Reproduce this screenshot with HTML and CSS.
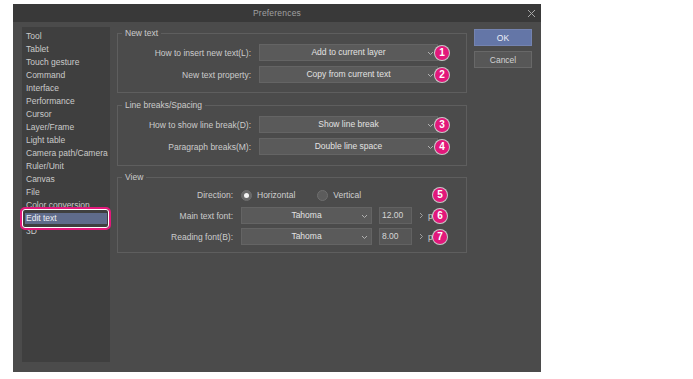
FILE: index.html
```html
<!DOCTYPE html>
<html lang="en">

<head>
    <meta charset="UTF-8">
    <meta name="viewport" content="width=device-width, initial-scale=1.0">
    <title>Preferences</title>
    <link rel="stylesheet" href="styles.css">
</head>

<body>

    <div class="dialog">
        <div class="titlebar">
            <span class="title">Preferences</span>
            <svg class="close" width="9" height="9" viewBox="0 0 9 9">
                <path d="M1 1 L8 8 M8 1 L1 8" stroke="#a8a8a8" stroke-width="1" fill="none" />
            </svg>
        </div>

        <div class="dialog-body">
            <ul class="categories">
                <li>Tool</li>
                <li>Tablet</li>
                <li>Touch gesture</li>
                <li>Command</li>
                <li>Interface</li>
                <li>Performance</li>
                <li>Cursor</li>
                <li>Layer/Frame</li>
                <li>Light table</li>
                <li>Camera path/Camera</li>
                <li>Ruler/Unit</li>
                <li>Canvas</li>
                <li>File</li>
                <li>Color conversion</li>
                <li class="active">Edit text</li>
                <li>3D</li>
            </ul>

            <div class="settings">
                <!-- New text -->
                <div class="group group-new">
                    <span class="group-title">New text</span>
                    <div class="row">
                        <span class="label">How to insert new text(L):</span>
                        <div class="select">Add to current layer<svg class="chev" width="7" height="5" viewBox="0 0 7 5"><path d="M1 1 L3.5 3.5 L6 1" stroke="#b0b0b0" fill="none" /></svg></div>
                        <span class="badge">1</span>
                    </div>
                    <div class="row">
                        <span class="label">New text property:</span>
                        <div class="select">Copy from current text<svg class="chev" width="7" height="5" viewBox="0 0 7 5"><path d="M1 1 L3.5 3.5 L6 1" stroke="#b0b0b0" fill="none" /></svg></div>
                        <span class="badge">2</span>
                    </div>
                </div>

                <!-- Line breaks -->
                <div class="group group-breaks">
                    <span class="group-title">Line breaks/Spacing</span>
                    <div class="row">
                        <span class="label">How to show line break(D):</span>
                        <div class="select">Show line break<svg class="chev" width="7" height="5" viewBox="0 0 7 5"><path d="M1 1 L3.5 3.5 L6 1" stroke="#b0b0b0" fill="none" /></svg></div>
                        <span class="badge">3</span>
                    </div>
                    <div class="row">
                        <span class="label">Paragraph breaks(M):</span>
                        <div class="select">Double line space<svg class="chev" width="7" height="5" viewBox="0 0 7 5"><path d="M1 1 L3.5 3.5 L6 1" stroke="#b0b0b0" fill="none" /></svg></div>
                        <span class="badge">4</span>
                    </div>
                </div>

                <!-- View -->
                <div class="group group-view">
                    <span class="group-title">View</span>
                    <div class="row row-direction">
                        <span class="label label-short">Direction:</span>
                        <span class="radio checked"></span><span class="radio-text">Horizontal</span>
                        <span class="radio"></span><span class="radio-text">Vertical</span>
                        <span class="badge badge-view">5</span>
                    </div>
                    <div class="row">
                        <span class="label label-short">Main text font:</span>
                        <div class="select select-font">Tahoma<svg class="chev" width="7" height="5" viewBox="0 0 7 5"><path d="M1 1 L3.5 3.5 L6 1" stroke="#b0b0b0" fill="none" /></svg></div>
                        <div class="number">12.00</div>
                        <svg class="spin" width="5" height="7" viewBox="0 0 5 7"><path d="M1 1 L3.5 3.5 L1 6" stroke="#a0a0a0" fill="none" /></svg>
                        <span class="unit">pt</span>
                        <span class="badge badge-view">6</span>
                    </div>
                    <div class="row">
                        <span class="label label-short">Reading font(B):</span>
                        <div class="select select-font">Tahoma<svg class="chev" width="7" height="5" viewBox="0 0 7 5"><path d="M1 1 L3.5 3.5 L6 1" stroke="#b0b0b0" fill="none" /></svg></div>
                        <div class="number">8.00</div>
                        <svg class="spin" width="5" height="7" viewBox="0 0 5 7"><path d="M1 1 L3.5 3.5 L1 6" stroke="#a0a0a0" fill="none" /></svg>
                        <span class="unit">pt</span>
                        <span class="badge badge-view">7</span>
                    </div>
                </div>
            </div>

            <div class="actions">
                <button class="btn btn-ok">OK</button>
                <button class="btn">Cancel</button>
            </div>
        </div>
    </div>

</body>

</html>
```

FILE: styles.css
```css
body {
    margin: 0;
    background-color: #ffffff;
    font-family: 'Liberation Sans', Arial, sans-serif;
    font-size: 8.5px;
}

.dialog {
    margin: 4px 0 0 13px;
    width: 528px;
    height: 368px;
    background-color: #4b4b4b;
    box-shadow: 0 1px 0 #8c8c8c;
    display: flex;
    flex-direction: column;
}

.titlebar {
    height: 18px;
    background-color: #393939;
    position: relative;
    display: flex;
    align-items: center;
    justify-content: center;
}

.title {
    color: #a0a0a0;
    letter-spacing: 0.2px;
}

.close {
    position: absolute;
    right: 5px;
    top: 5px;
}

.dialog-body {
    flex: 1;
    display: flex;
    padding: 5px 9px 10px 9px;
}

/* left list */
.categories {
    list-style: none;
    margin: 0;
    padding: 3px 3px 0 3px;
    width: 82px;
    background-color: #3f3f3f;
    color: #cacaca;
}

.categories li {
    height: 13px;
    line-height: 13px;
    padding-left: 1px;
    white-space: nowrap;
}

.categories li.active {
    position: relative;
    background-color: #5f6b8b;
    box-shadow: inset 0 1px 0 #3f3f3f, inset 0 -1px 0 #3f3f3f;
    color: #eef0f6;
}

/* highlight ring drawn on the screenshot */
.categories li.active::after {
    content: '';
    position: absolute;
    left: -5px;
    right: -4px;
    top: -5px;
    bottom: -5px;
    border: 2.5px solid #e2197b;
    border-radius: 5px;
    box-shadow: inset 0 0 0 1px #ffffff;
}

/* settings */
.settings {
    width: 350px;
    margin-left: 7px;
    padding-top: 6px;
}

.group {
    position: relative;
    border: 1px solid #5e5e5e;
    padding: 10px 0 9px 0;
    display: flex;
    flex-direction: column;
    gap: 5px;
}

.group-breaks {
    margin-top: 12px;
    padding-bottom: 10px;
}

.group-view {
    margin-top: 11px;
    padding: 11px 0 7px 0;
    gap: 4px;
}

.group-title {
    position: absolute;
    top: -6px;
    left: 4px;
    padding: 0 3px;
    line-height: 11px;
    background-color: #4b4b4b;
    color: #cccccc;
}

.row {
    position: relative;
    display: flex;
    align-items: center;
    height: 17px;
}

.row-direction {
    height: 12px;
    margin-bottom: 2px;
}

.label {
    width: 133px;
    margin-right: 8px;
    text-align: right;
    color: #cbcbcb;
    white-space: nowrap;
}

.label-short {
    width: 115px;
}

.select {
    position: relative;
    width: 177px;
    height: 15px;
    line-height: 15px;
    border: 1px solid #646464;
    background-color: #5a5a5a;
    color: #e2e2e2;
    text-align: center;
}

.select-font {
    width: 129px;
}

.chev {
    position: absolute;
    right: 3px;
    top: 6px;
}

.number {
    width: 29px;
    height: 15px;
    line-height: 15px;
    margin-left: 7px;
    padding-left: 2px;
    border: 1px solid #626262;
    background-color: #565656;
    color: #d6d6d6;
}

.spin {
    margin-left: 7px;
}

.unit {
    margin-left: 4px;
    color: #cbcbcb;
}

.radio {
    width: 9px;
    height: 9px;
    border-radius: 50%;
    border: 1px solid #6e6e6e;
    background-color: #5c5c5c;
    position: relative;
}

.radio.checked {
    background-color: #6a6a6a;
}

.radio.checked::after {
    content: '';
    position: absolute;
    left: 2px;
    top: 2px;
    width: 5px;
    height: 5px;
    border-radius: 50%;
    background-color: #f4f4f4;
}

.radio-text {
    margin-left: 5px;
    margin-right: 22px;
    color: #d0d0d0;
}

/* numbered callouts */
.badge {
    position: absolute;
    right: 17px;
    top: 50%;
    margin-top: -7px;
    width: 14px;
    height: 14px;
    border-radius: 50%;
    background-color: #e2187b;
    box-shadow: 0 0 0 1px rgba(255, 255, 255, 0.7);
    color: #ffffff;
    font-weight: bold;
    font-size: 10px;
    line-height: 14px;
    text-align: center;
}

.badge-view {
    right: 19px;
}

/* buttons */
.actions {
    width: 58px;
    margin-left: 7px;
    padding-top: 2px;
    display: flex;
    flex-direction: column;
    gap: 5px;
}

.btn {
    height: 17px;
    padding: 0;
    font-family: inherit;
    font-size: 8.5px;
    border: 1px solid #686868;
    background-color: #575757;
    color: #d2d2d2;
}

.btn-ok {
    border-color: #7483b0;
    background-color: #6476a7;
    color: #eef0f7;
}
```
